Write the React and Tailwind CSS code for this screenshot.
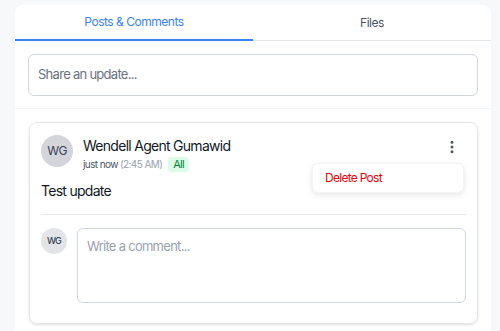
import { MoreVertical } from 'lucide-react';

function Avatar({ size, text }) {
  return (
    <div
      className={
        size === 'lg'
          ? 'w-8 h-8 rounded-full bg-[#d4d5da] flex items-center justify-center text-[12px] text-gray-700 shrink-0'
          : 'w-[26px] h-[26px] rounded-full bg-[#e3e4e8] flex items-center justify-center text-[9px] font-medium text-gray-700 shrink-0'
      }
    >
      {text}
    </div>
  );
}

export default function App() {
  return (
    <div className="min-h-screen bg-[#f7f8fa] pt-[5px] font-['Inter',sans-serif] tracking-[-0.045em]">
      <div className="ml-[15px] mr-[9px] bg-white rounded-t-lg h-[326px] overflow-hidden">
        <div className="flex h-9 border-b border-gray-200">
          <button className="flex-1 text-[12px] tracking-[-0.04em] text-[#3b82f6] border-b-2 border-[#3b82f6] -mb-px">
            Posts &amp; Comments
          </button>
          <button className="flex-1 text-[12px] tracking-[-0.04em] text-gray-600">Files</button>
        </div>

        <div className="px-[13px] pt-[13px] pb-3 border-b border-gray-100">
          <div className="h-[42px] border border-gray-300 rounded-md flex items-center px-[9px] text-[13px] text-gray-500">
            Share an update...
          </div>
        </div>

        <div className="pl-[14px] pr-[13px] pt-[13px]">
          <div className="relative border border-gray-200 rounded-lg shadow-sm px-[11px] pt-3 pb-5">
            <div className="flex items-start gap-[10px]">
              <Avatar size="lg" text="WG" />
              <div className="flex-1 pt-[1px]">
                <div className="text-[14px] text-gray-900 leading-5">
                  Wendell Agent Gumawid
                </div>
                <div className="flex items-center gap-[6px] mt-[1px]">
                  <span className="text-[10px] tracking-[-0.06em] text-gray-600">
                    just now <span className="text-gray-400">(2:45 AM)</span>
                  </span>
                  <span className="text-[11px] text-green-700 bg-green-100 rounded px-[5px] leading-[15px]">
                    All
                  </span>
                </div>
              </div>
              <div className="w-6 h-6 mr-[2px] flex items-center justify-center">
                <MoreVertical className="w-4 h-4 text-gray-600" strokeWidth={2.5} />
              </div>
            </div>

            <div className="absolute right-[13px] top-[40px] w-[152px] h-[30px] bg-white rounded-md border border-gray-100 shadow-[0_2px_6px_rgba(0,0,0,0.1)] flex items-center px-3 text-[12px] text-red-600">
              Delete Post
            </div>

            <div className="text-[14px] text-gray-900 mt-[8px] pb-[13px] border-b border-gray-200">
              Test update
            </div>

            <div className="flex items-start gap-[10px] mt-[13px]">
              <Avatar size="sm" text="WG" />
              <div className="flex-1 h-[75px] border border-gray-300 rounded-md px-[9px] pt-[8px] text-[13px] text-gray-400">
                Write a comment...
              </div>
            </div>
          </div>
        </div>
      </div>
    </div>
  );
}
